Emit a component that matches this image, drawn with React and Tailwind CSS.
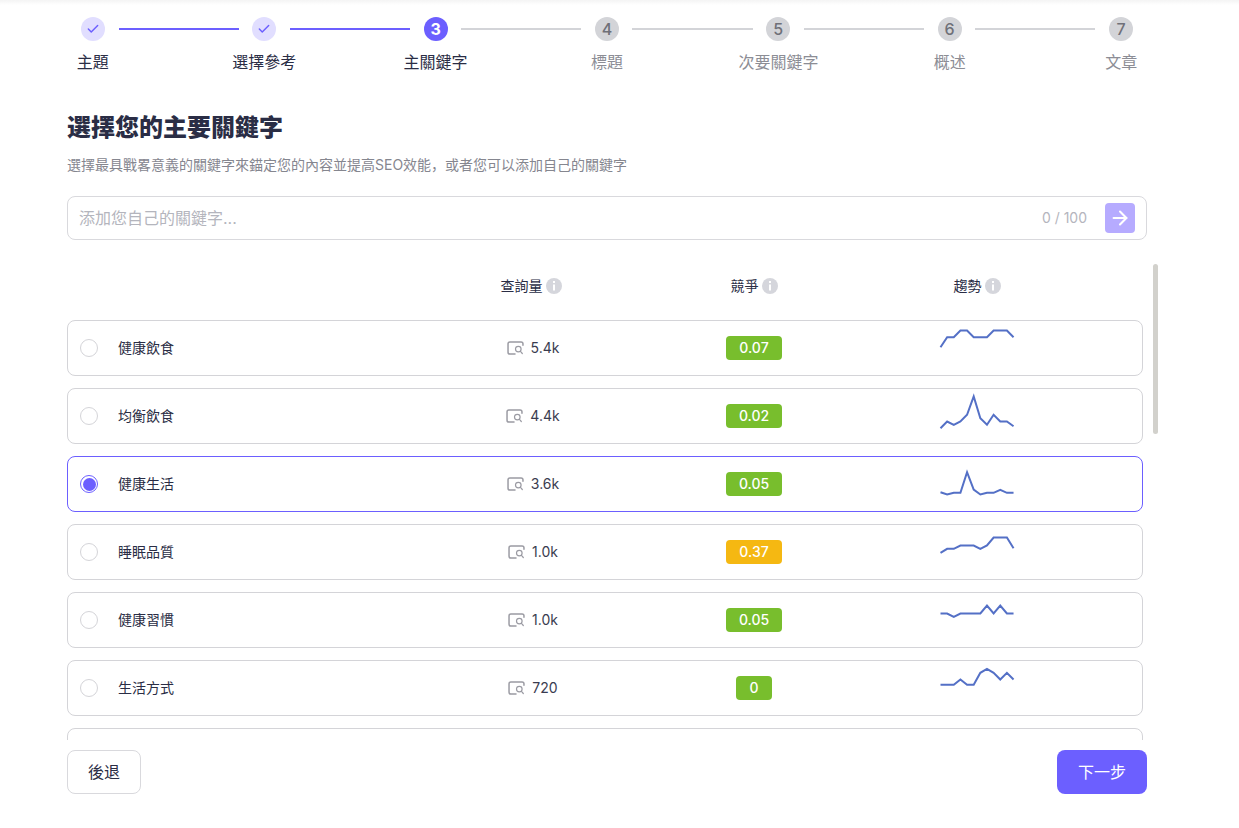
import React from "react";
import { Check, ArrowRight } from "lucide-react";

const steps = [
  { label: "主題", state: "done" },
  { label: "選擇參考", state: "done" },
  { label: "主關鍵字", state: "active" },
  { label: "標題", state: "todo" },
  { label: "次要關鍵字", state: "todo" },
  { label: "概述", state: "todo" },
  { label: "文章", state: "todo" },
];

// trend values are the line's y inside a 56px row, one per 6.6px step
const rows = [
  { name: "健康飲食", volume: "5.4k", score: "0.07", color: "bg-[#78be2d]", trend: [26.7, 16.7, 16.7, 10, 10, 16.7, 16.7, 16.7, 10, 10, 10, 16.7] },
  { name: "均衡飲食", volume: "4.4k", score: "0.02", color: "bg-[#78be2d]", trend: [39.7, 33, 36.3, 33, 26.3, 8, 29.7, 36.3, 26.3, 33, 33, 37.7] },
  { name: "健康生活", volume: "3.6k", score: "0.05", color: "bg-[#78be2d]", trend: [35.7, 38, 36.3, 36.3, 15.7, 33, 38, 36.3, 36.3, 33.3, 36.3, 36.3], selected: true },
  { name: "睡眠品質", volume: "1.0k", score: "0.37", color: "bg-[#f5b812]", trend: [28.3, 24.3, 24.3, 21, 21, 21, 24.3, 21, 13, 13, 13, 23.7] },
  { name: "健康習慣", volume: "1.0k", score: "0.05", color: "bg-[#78be2d]", trend: [21, 21, 24.3, 21, 21, 21, 21, 13, 21, 13, 21, 21] },
  { name: "生活方式", volume: "720", score: "0", color: "bg-[#78be2d]", trend: [24.3, 24.3, 24.3, 19, 24.3, 24.3, 12.3, 8.3, 12.3, 19, 12.3, 19] },
];

function InfoIcon() {
  return (
    <svg viewBox="0 0 16 16" className="h-4 w-4 shrink-0">
      <circle cx="8" cy="8" r="8" fill="#d5d6dc" />
      <rect x="7" y="3" width="2" height="2" fill="#fff" />
      <rect x="7" y="6.5" width="2" height="6" fill="#fff" />
    </svg>
  );
}

function SearchBox() {
  return (
    <svg viewBox="0 0 18 15" fill="none" className="h-[14px] w-[17px] shrink-0">
      <path d="M8.5 14H3a2 2 0 0 1-2-2V3a2 2 0 0 1 2-2h12a2 2 0 0 1 2 2v1.5" stroke="#9b9ba3" strokeWidth="1.6" strokeLinecap="round" />
      <circle cx="12" cy="8.7" r="3" stroke="#9b9ba3" strokeWidth="1.3" />
      <path d="M14.3 11.2l2 2.2" stroke="#9b9ba3" strokeWidth="1.3" strokeLinecap="round" />
    </svg>
  );
}

function Trend({ values }) {
  const points = values.map((y, i) => `${3.5 + i * 6.64},${y - 3.5}`).join(" ");
  return (
    <svg viewBox="0 0 80 48" className="h-12 w-20">
      <polyline points={points} fill="none" stroke="#5470c6" strokeWidth="2" />
    </svg>
  );
}

function StepDot({ step, index }) {
  if (step.state === "done") {
    return (
      <span className="flex h-6 w-6 shrink-0 items-center justify-center rounded-full bg-[#e1deff] text-[#6c5fff]">
        <Check size={14} strokeWidth={2.5} />
      </span>
    );
  }
  if (step.state === "active") {
    return (
      <span className="flex h-6 w-6 shrink-0 items-center justify-center rounded-full bg-[#6c5fff] text-base font-bold text-white">
        {index + 1}
      </span>
    );
  }
  return (
    <span className="flex h-6 w-6 shrink-0 items-center justify-center rounded-full bg-[#d3d4d8] text-base font-medium text-[#6f7078]">
      {index + 1}
    </span>
  );
}

const gridCols = "grid grid-cols-[355px_220px_222px_224px_1fr] items-center";

export default function App() {
  return (
    <div className="flex h-[828px] w-full flex-col overflow-hidden bg-white font-['Inter','Noto_Sans_CJK_SC',sans-serif] text-[#2a2d45]">
      <div className="h-[5px] shrink-0 bg-gradient-to-b from-[#f4f4f4] to-white" />

      {/* STEPPER */}
      <div className="mx-[81px] mt-3 flex w-[1052px] items-center gap-[13.5px]">
        {steps.map((step, i) => (
          <React.Fragment key={step.label}>
            <StepDot step={step} index={i} />
            {i < steps.length - 1 && (
              <div className={i < 2 ? "h-0.5 flex-1 bg-[#6c5fff]" : "h-0.5 flex-1 bg-[#d3d4d8]"} />
            )}
          </React.Fragment>
        ))}
      </div>
      <div className="ml-[7px] mt-[9px] grid w-[1200px] grid-cols-7 text-center text-base leading-6">
        {steps.map((step) => (
          <div key={step.label} className={step.state === "todo" ? "text-[#8c8d95]" : "text-[#2a2d45]"}>
            {step.label}
          </div>
        ))}
      </div>

      <div className="flex flex-1 flex-col px-[67px]">
        <h1 className="mt-[38px] text-2xl font-black leading-8">選擇您的主要關鍵字</h1>
        <p className="mt-[11px] text-sm leading-5 text-[#85868f]">
          選擇最具戰畧意義的關鍵字來錨定您的內容並提高SEO效能，或者您可以添加自己的關鍵字
        </p>

        {/* KEYWORD INPUT */}
        <div className="mt-[21px] flex h-11 w-[1080px] items-center rounded-lg border border-[#d9d9dd] pl-[11px] pr-[11px]">
          <span className="flex-1 text-base text-[#b4b5bd]">添加您自己的關鍵字...</span>
          <span className="mr-[18px] text-sm text-[#b4b5bd]">0 / 100</span>
          <span className="flex h-[30px] w-[30px] items-center justify-center rounded bg-[#b6abff] text-white">
            <ArrowRight size={22} strokeWidth={2.25} />
          </span>
        </div>

        {/* TABLE */}
        <div className="mt-6 flex h-[476px] gap-2.5 overflow-hidden">
          <div className="w-[1076px] shrink-0">
            <div className={`${gridCols} mb-3 h-11 px-px text-sm`}>
              <div />
              <div className="flex items-center justify-center gap-[3px] pr-1">
                查詢量 <InfoIcon />
              </div>
              <div className="flex items-center justify-center gap-[3px]">
                競爭 <InfoIcon />
              </div>
              <div className="flex items-center justify-center gap-[3px]">
                趨勢 <InfoIcon />
              </div>
            </div>

            <div className="flex flex-col gap-3">
              {rows.map((row) => (
                <div
                  key={row.name}
                  className={`${gridCols} h-14 rounded-lg border ${row.selected ? "border-[#6c5fff]" : "border-[#d4d4d8]"}`}
                >
                  <div className="flex items-center pl-3 text-sm">
                    {row.selected ? (
                      <span className="flex h-[18px] w-[18px] items-center justify-center rounded-full border border-[#6c5fff]">
                        <span className="h-[13px] w-[13px] rounded-full bg-[#6c5fff]" />
                      </span>
                    ) : (
                      <span className="h-[18px] w-[18px] rounded-full border border-[#d4d4d8]" />
                    )}
                    <span className="ml-5">{row.name}</span>
                  </div>
                  <div className="flex items-center justify-center gap-[7px] text-sm text-[#3a3c50]">
                    <SearchBox />
                    {row.volume}
                  </div>
                  <div className="flex justify-center">
                    <span className={`flex h-6 items-center rounded px-[13px] text-sm font-medium text-white ${row.color}`}>
                      {row.score}
                    </span>
                  </div>
                  <div className="flex justify-center">
                    <Trend values={row.trend} />
                  </div>
                </div>
              ))}
              <div className="h-14 rounded-lg border border-[#d4d4d8]" />
            </div>
          </div>
          <div className="h-[170px] w-[5px] shrink-0 rounded-full bg-[#d2d1cc]" />
        </div>

        {/* FOOTER */}
        <div className="mt-2.5 flex w-[1080px] items-center justify-between text-base">
          <button type="button" className="h-11 w-[74px] rounded-lg border border-[#d9d9dd] bg-white">
            後退
          </button>
          <button type="button" className="h-11 w-[90px] rounded-lg bg-[#6c5fff] text-white">
            下一步
          </button>
        </div>
      </div>
    </div>
  );
}
